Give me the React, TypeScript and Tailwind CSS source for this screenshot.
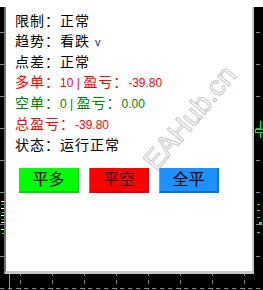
import React from 'react';

const gridX = [20, 52, 84, 116, 148, 180, 212, 244];
const gridY = [32, 64, 96, 128, 160, 192, 224, 256, 288];

function Chart() {
  return (
    <svg className="absolute inset-0" width={263} height={290} viewBox="0 0 263 290">
      {gridX.map((x) => (
        <line key={'v' + x} x1={x + 0.5} y1={0} x2={x + 0.5} y2={290} stroke="#778899" strokeDasharray="4 4" />
      ))}
      {gridY.map((y) => (
        <line key={'h' + y} x1={0} y1={y + 0.5} x2={263} y2={y + 0.5} stroke="#778899" strokeDasharray="4 4" />
      ))}
      {/* green level line on the left */}
      <line x1={9.5} y1={274} x2={9.5} y2={290} stroke="#00ff00" />
      {/* left tick marks */}
      {[201, 208, 215, 222, 229].map((y) => (
        <rect key={'l' + y} x={1} y={y} width={3} height={1} fill="#ffffff" />
      ))}
      {[204, 212, 219, 233].map((y) => (
        <rect key={'lg' + y} x={2} y={y} width={2} height={1} fill="#00ff00" />
      ))}
      {/* right side green marks */}
      {[204, 210, 217, 232].map((y) => (
        <rect key={'r' + y} x={257} y={y} width={3} height={1} fill="#00ff00" />
      ))}
      <rect x={259} y={222} width={3} height={3} fill="#00ff00" />
      {/* candle */}
      <line x1={260.5} y1={121} x2={260.5} y2={138} stroke="#00ff00" />
      <rect x={255.5} y={129.5} width={8} height={3} fill="#000" stroke="#00ff00" />
    </svg>
  );
}

function Btn({ label, cls }: { label: string; cls: string }) {
  return (
    <div className={`w-[60px] h-[25px] flex items-center justify-center text-[16px] text-black ${cls}`}>
      {label}
    </div>
  );
}

export default function App() {
  return (
    <div
      className="relative w-[263px] h-[290px] bg-black overflow-hidden"
      style={{ fontFamily: '"Liberation Sans", "Noto Sans CJK SC", sans-serif' }}
    >
      <Chart />
      <div className="relative h-[7px] w-full bg-white" />
      <div className="relative ml-[4px] w-[250px] h-[267px] bg-white border-l-2 border-l-[#707070] border-r-2 border-r-[#c8c8c8] border-b-[3px] border-b-[#c8c8c8] pt-[4px] pl-[9px]">
        {/* watermark */}
        <div className="absolute left-[114px] top-[97px] w-[140px] text-center text-[28px] leading-none text-white/0 [-webkit-text-stroke:1px_#c8c8c8] -rotate-[50deg] pointer-events-none">
          EAHub.cn
        </div>
        <div className="relative text-[14px] leading-[20px] tracking-[1px]">
          <div className="text-black">限制：正常</div>
          <div className="text-black">
            趋势：看跌 <span className="text-[11px] text-[#22228a] tracking-normal">v</span>
          </div>
          <div className="text-black">点差：正常</div>
          <div className="text-[#ff0000]">
            多单：<span className="text-[12px] tracking-normal">10 | </span>盈亏：
            <span className="text-[12px] tracking-normal">-39.80</span>
          </div>
          <div className="text-[#008000]">
            空单：<span className="text-[12px] tracking-normal">0 | </span>盈亏：
            <span className="text-[12px] tracking-normal">0.00</span>
          </div>
          <div className="text-[#ff0000]">
            总盈亏：<span className="text-[12px] tracking-normal">-39.80</span>
          </div>
          <div className="text-black">状态：运行正常</div>
        </div>
        <div className="relative flex gap-[10px] mt-[13px] ml-[4px]">
          <Btn label="平多" cls="bg-[#00ff00] border-b-2 border-r border-b-[#00d800] border-r-[#00d800]" />
          <Btn label="平空" cls="bg-[#ff0000] border-b-2 border-r border-l border-l-[#ff4a4a] border-b-[#e00000] border-r-[#e00000]" />
          <Btn label="全平" cls="bg-[#1e90ff] border-b-2 border-r-2 border-l border-l-[#50a8ff] border-b-[#0078d7] border-r-[#0078d7]" />
        </div>
      </div>
    </div>
  );
}
